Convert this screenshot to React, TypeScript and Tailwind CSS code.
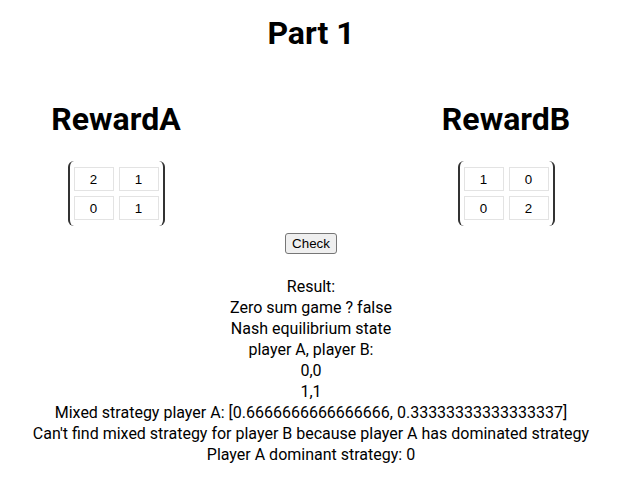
import { useState } from "react";

type Matrix = number[][];

const MatrixInput = ({
  title,
  values,
  onChange,
}: {
  title: string;
  values: Matrix;
  onChange: (r: number, c: number, v: number) => void;
}) => {
  return (
    <div className="flex w-[232px] flex-col items-center">
      <h2 className="mt-[48px] text-[32px] font-bold leading-[38px]">{title}</h2>
      <div className="mt-[23px] rounded-[6px] border-x-2 border-y-0 border-[#333] px-[4px] py-[6px]">
        <div className="grid grid-cols-2 gap-[5px]">
          {values.map((row, r) =>
            row.map((v, c) => (
              <input
                key={`${r}-${c}`}
                value={v}
                onChange={(e) => onChange(r, c, +e.target.value)}
                className="h-[24px] w-[40px] border border-[#e3e3e3] text-center font-['Liberation_Sans',Arial,sans-serif] text-[13.33px] text-black outline-none"
              />
            ))
          )}
        </div>
      </div>
    </div>
  );
};

export default function App() {
  const [rewardA, setRewardA] = useState<Matrix>([
    [2, 1],
    [0, 1],
  ]);
  const [rewardB, setRewardB] = useState<Matrix>([
    [1, 0],
    [0, 2],
  ]);

  const update =
    (m: Matrix, set: (m: Matrix) => void) => (r: number, c: number, v: number) => {
      const next = m.map((row) => [...row]);
      next[r][c] = v;
      set(next);
    };

  const lines = [
    "Result:",
    "Zero sum game ? false",
    "Nash equilibrium state",
    "player A, player B:",
    "0,0",
    "1,1",
    "Mixed strategy player A: [0.6666666666666666, 0.33333333333333337]",
    "Can't find mixed strategy for player B because player A has dominated strategy",
    "Player A dominant strategy: 0",
  ];

  return (
    <div className="w-[622px] bg-white pb-4 font-['Roboto',sans-serif] text-black">
      <h1 className="pt-[14px] text-center text-[32px] font-bold leading-[38px]">Part 1</h1>
      <div className="flex justify-between">
        <MatrixInput title="RewardA" values={rewardA} onChange={update(rewardA, setRewardA)} />
        <MatrixInput title="RewardB" values={rewardB} onChange={update(rewardB, setRewardB)} />
      </div>
      <div className="mt-[7px] flex justify-center">
        <button className="h-[21px] rounded-[3px] border border-[#767676] bg-[#efefef] px-[6px] font-['Liberation_Sans',Arial,sans-serif] text-[13.33px] leading-none">
          Check
        </button>
      </div>
      <div className="mt-[22px] flex flex-col items-center text-[16px] leading-[21px]">
        {lines.map((l) => (
          <div key={l}>{l}</div>
        ))}
      </div>
    </div>
  );
}
